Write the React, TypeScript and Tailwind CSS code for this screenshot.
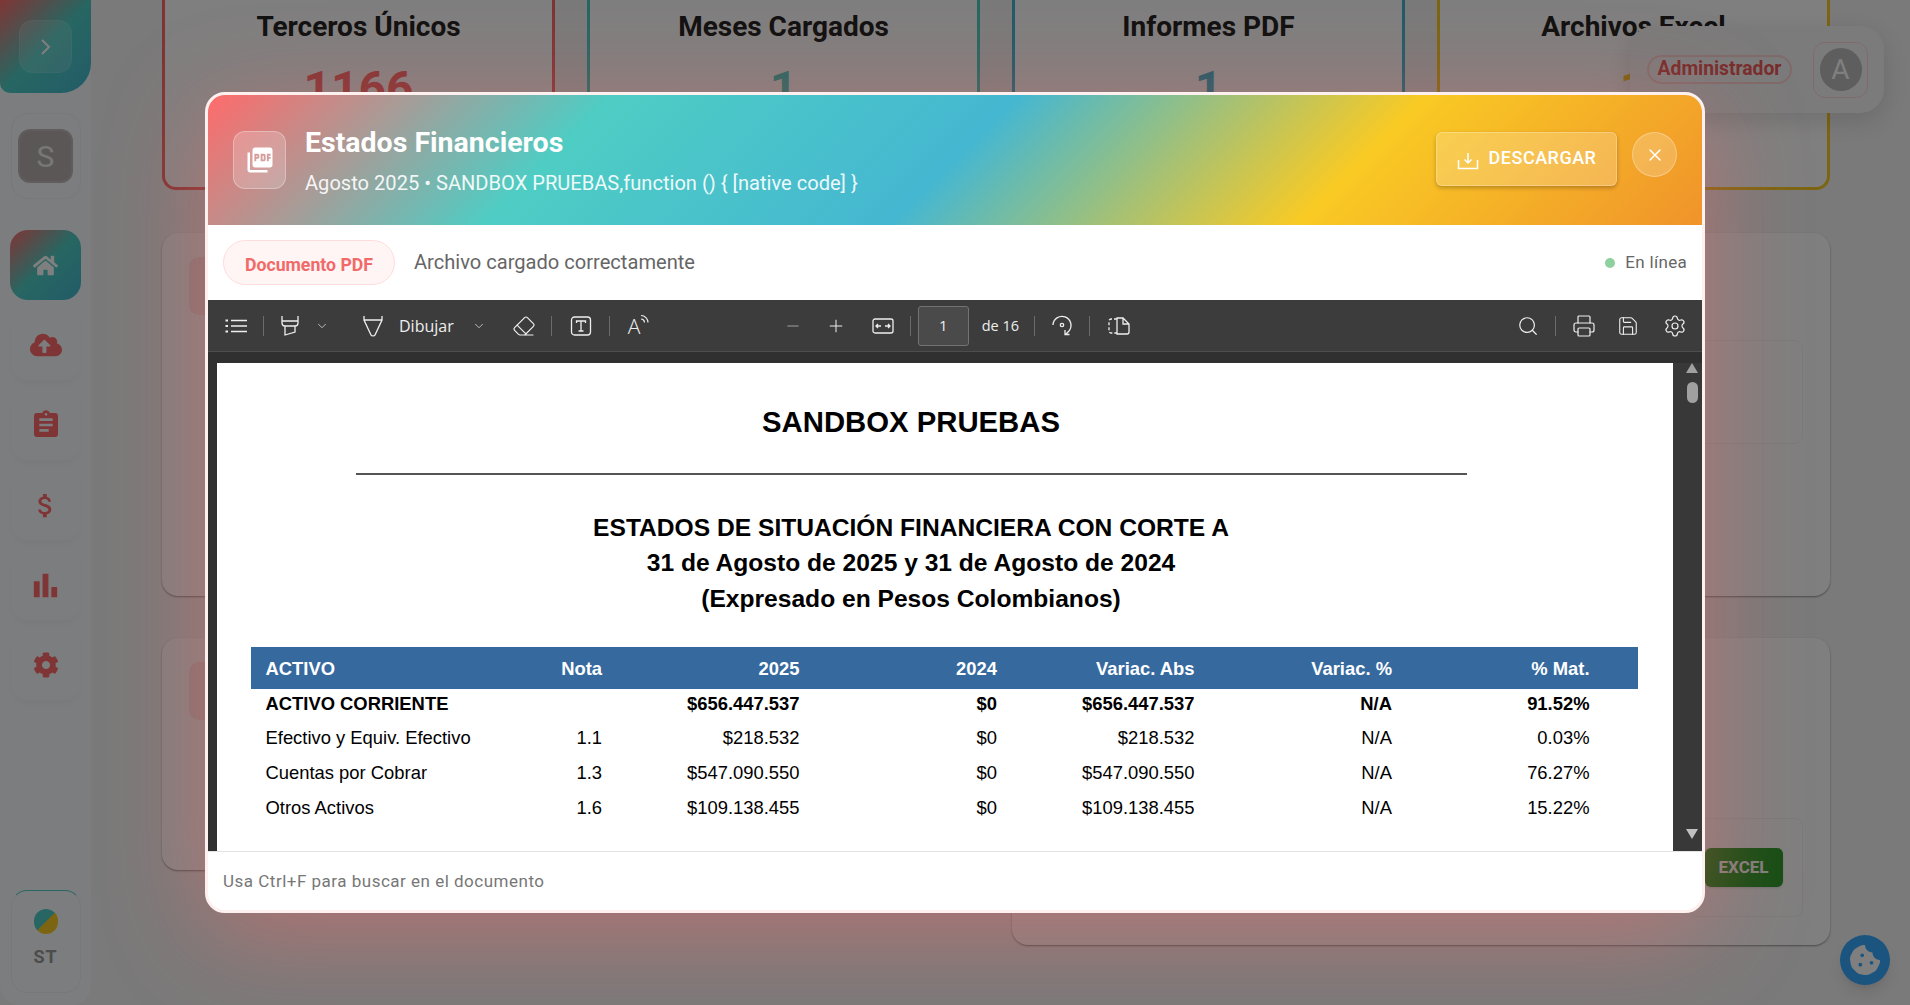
import { ChevronDown, Eraser, Minus, Plus, Printer, Save, Search, Settings, X } from "lucide-react";
import { FaCloudUploadAlt, FaCog, FaCookieBite, FaHome } from "react-icons/fa";
import { MdAssignment, MdAttachMoney, MdBarChart, MdPictureAsPdf } from "react-icons/md";

const stats = [
    { title: "Terceros Únicos", value: "1166", border: "border-[#ff6b6b]", text: "text-[#ff6b6b]" },
    { title: "Meses Cargados", value: "1", border: "border-[#4ecdc4]", text: "text-[#4ecdc4]" },
    { title: "Informes PDF", value: "1", border: "border-[#45b7d1]", text: "text-[#45b7d1]" },
    { title: "Archivos Excel", value: "1", border: "border-[#f9ca24]", text: "text-[#f9ca24]" },
];

const navItems = [
    { Icon: FaCloudUploadAlt, size: 32 },
    { Icon: MdAssignment, size: 32 },
    { Icon: MdAttachMoney, size: 31 },
    { Icon: MdBarChart, size: 35 },
    { Icon: FaCog, size: 26 },
];

const rows = [
    ["ACTIVO CORRIENTE", "", "$656.447.537", "$0", "$656.447.537", "N/A", "91.52%"],
    ["Efectivo y Equiv. Efectivo", "1.1", "$218.532", "$0", "$218.532", "N/A", "0.03%"],
    ["Cuentas por Cobrar", "1.3", "$547.090.550", "$0", "$547.090.550", "N/A", "76.27%"],
    ["Otros Activos", "1.6", "$109.138.455", "$0", "$109.138.455", "N/A", "15.22%"],
];

function Sep({ className }: { className: string }) {
    return <span className={`block h-[20px] w-px bg-[#6b6b6b] shrink-0 ${className}`} />;
}

function Sidebar() {
    return (
        <aside className="w-[91px] h-full shrink-0 bg-[#f8fbff] rounded-b-[20px] flex flex-col items-center">
            <div className="w-full h-[93px] rounded-br-[30px] rounded-bl-[10px] bg-[linear-gradient(135deg,#ff6b6b_0%,#4ecdc4_50%,#45b7d1_100%)] flex items-center justify-center">
                <div className="w-[53px] h-[53px] rounded-[14px] bg-white/15 border border-white/10 flex items-center justify-center text-white">
                    <svg width="14" height="20" viewBox="0 0 14 20" fill="none" stroke="currentColor" strokeWidth="2"><path d="M3 3l7 7-7 7" /></svg>
                </div>
            </div>
            <div className="mt-[20px] w-[70px] h-[86px] rounded-[16px] border border-[#f0f0f0] flex items-center justify-center">
                <div className="w-[55px] h-[54px] rounded-[12px] bg-[#b8aeae] border-2 border-[#c4baba] text-[#eeeeee] text-[30px] flex items-center justify-center">S</div>
            </div>
            <div className="mt-[31px] w-[71px] h-[70px] rounded-[18px] bg-[linear-gradient(135deg,#ff6b6b_0%,#4ecdc4_50%,#45b7d1_100%)] flex items-center justify-center text-white">
                <FaHome size={25} />
            </div>
            <div className="mt-[10px] flex flex-col gap-[10px]">
                {navItems.map(({ Icon, size }, i) => (
                    <div key={i} className="w-[68px] h-[70px] rounded-[16px] shadow-[0_4px_8px_rgba(0,0,0,0.03)] flex items-center justify-center text-[#ff6b6b]">
                        <Icon size={size} />
                    </div>
                ))}
            </div>
            <div className="mt-auto mb-[12px] w-[70px] h-[103px] rounded-[16px] border border-[#f0f0f0] border-t-[#4ecdc4] flex flex-col items-center pt-[18px]">
                <span className="w-[24px] h-[25px] rounded-full bg-[linear-gradient(135deg,#4ecdc4_50%,#f9ca24_50%)]" />
                <span className="mt-[9px] text-[18px] font-bold tracking-[1px] text-[#999]">ST</span>
            </div>
        </aside>
    );
}

function Dashboard() {
    return (
        <div className="flex-1 pl-[71px] pr-[80px]">
            <div className="grid grid-cols-4 gap-[32px]">
                {stats.map((s) => (
                    <div key={s.title} className={`h-[190px] bg-white border-x-[3px] border-b-[3px] rounded-b-[14px] flex flex-col items-center ${s.border}`}>
                        <h3 className="mt-[9px] text-[28px] leading-[36px] font-bold text-[#222]">{s.title}</h3>
                        <p className={`mt-[16px] text-[48px] leading-[56px] font-bold ${s.text}`}>{s.value}</p>
                        <p className="mt-[1px] text-[16px] text-[#888]">Archivos cargados</p>
                    </div>
                ))}
            </div>
            <div className="mt-[43px] h-[363px] bg-white rounded-[16px] shadow-[0_1px_2px_rgba(0,0,0,0.4)] pl-[27px] pr-[27px] pt-[24px] flex justify-between">
                <div className="w-[50px] h-[58px] rounded-[10px] bg-[#ffe6e6]" />
                <div className="mt-[83px] w-[250px] h-[104px] border border-[#f3f3f3] rounded-[8px]" />
            </div>
            <div className="mt-[42px] grid grid-cols-2 gap-[32px] items-start">
                <div className="h-[232px] bg-white rounded-[16px] shadow-[0_1px_2px_rgba(0,0,0,0.4)] pl-[27px] pt-[24px]">
                    <div className="w-[50px] h-[58px] rounded-[10px] bg-[#ffe6e6]" />
                </div>
                <div className="h-[307px] bg-white rounded-[16px] shadow-[0_1px_2px_rgba(0,0,0,0.4)] pr-[27px] pt-[180px] flex justify-end">
                    <div className="w-[113px] h-[99px] border border-[#f3f3f3] rounded-[8px] flex items-center justify-center pr-[6px]">
                        <span className="w-[78px] h-[39px] rounded-[6px] bg-[#2a9d2a] text-white font-bold text-[17px] flex items-center justify-center shadow-sm">EXCEL</span>
                    </div>
                </div>
            </div>
        </div>
    );
}

function Toolbar() {
    const icon = "text-[#eeeeee] shrink-0";
    return (
        <div className="h-[52px] shrink-0 bg-[#3c3c3c] border-b border-[#4d4d4d] flex items-center text-[#eeeeee] font-['Open_Sans',sans-serif]">
            <svg width="22" height="16" viewBox="0 0 22 16" fill="none" stroke="currentColor" strokeWidth="1.300" className={`${icon} ml-[17px]`}>
                <path d="M6 2.500h16M6 8h16M6 13.500h16" />
                <path d="M0.500 2.500h2.500M0.500 8h2.500M0.500 13.500h2.500" strokeWidth="2.200" />
            </svg>
            <Sep className="ml-[16px]" />
            <svg width="20" height="24" viewBox="0 0 20 24" fill="none" stroke="currentColor" strokeWidth="1.300" className={`${icon} ml-[16px]`}>
                <path d="M2 2v7a3 3 0 0 0 3 3h10a3 3 0 0 0 3-3V2M2 7h16M5 12v9l10-3v-6" />
            </svg>
            <ChevronDown size={14} strokeWidth={1.2} className={`${icon} ml-[15px]`} />
            <svg width="22" height="24" viewBox="0 0 22 24" fill="none" stroke="currentColor" strokeWidth="1.300" className={`${icon} ml-[33px]`}>
                <path d="M2 2v4l7 15c.5 1.200 3.500 1.200 4 0l7-15V2M2 6h18" />
            </svg>
            <span className="ml-[15px] text-[16px]">Dibujar</span>
            <ChevronDown size={14} strokeWidth={1.2} className={`${icon} ml-[18px]`} />
            <Eraser size={24} strokeWidth={1.2} className={`${icon} ml-[26px]`} />
            <Sep className="ml-[15px]" />
            <svg width="22" height="22" viewBox="0 0 22 22" fill="none" stroke="currentColor" strokeWidth="1.300" className={`${icon} ml-[18px]`}>
                <rect x="1.500" y="2" width="19" height="18" rx="3" />
                <path d="M6.500 8V6h9v2M11 6v10M8.500 16h5" />
            </svg>
            <Sep className="ml-[17px]" />
            <span className="ml-[18px] relative w-[21px] h-[24px] text-[21px] leading-[24px] font-light">
                A
                <svg width="10" height="11" viewBox="0 0 10 11" fill="none" stroke="currentColor" strokeWidth="1.200" className="absolute right-[-1px] top-[0px]">
                    <path d="M1 5a3.500 3.500 0 0 1 3.500 3.500M1 1.500a7 7 0 0 1 7 7" />
                </svg>
            </span>
            <Minus size={18} strokeWidth={1.2} className="text-[#aaaaaa] shrink-0 ml-[135px]" />
            <Plus size={20} strokeWidth={1.2} className={`${icon} ml-[24px]`} />
            <svg width="22" height="16" viewBox="0 0 22 16" fill="none" stroke="currentColor" strokeWidth="1.300" className={`${icon} ml-[26px]`}>
                <rect x="1" y="1" width="20" height="14" rx="2" />
                <path d="M4 8h5M6 6L4 8l2 2M18 8h-5M16 6l2 2-2 2" />
            </svg>
            <Sep className="ml-[16px]" />
            <span className="ml-[7px] w-[51px] h-[40px] rounded-[3px] bg-[#4a4a4a] border border-[#737373] text-[15px] flex items-center justify-center">1</span>
            <span className="ml-[13px] text-[14.500px] whitespace-nowrap">de 16</span>
            <Sep className="ml-[15px]" />
            <svg width="22" height="24" viewBox="0 0 22 24" fill="none" stroke="currentColor" strokeWidth="1.300" className={`${icon} ml-[16px]`}>
                <path d="M2 11a9 9 0 1 1 16 6l-3 3M14 16v4.500h4.500" />
                <circle cx="11" cy="11" r="1.700" />
            </svg>
            <Sep className="ml-[16px]" />
            <svg width="22" height="18" viewBox="0 0 22 18" fill="none" stroke="currentColor" strokeWidth="1.300" className={`${icon} ml-[18px]`}>
                <path d="M9 2H3a2 2 0 0 0-2 2v10a2 2 0 0 0 2 2h6" strokeDasharray="3 2" />
                <path d="M9 1v16h10a2 2 0 0 0 2-2V7l-6-6zM15 1v6h6" />
            </svg>
            <Search size={22} strokeWidth={1.3} className={`${icon} ml-auto`} />
            <Sep className="ml-[16px]" />
            <Printer size={24} strokeWidth={1.2} className={`${icon} ml-[16px]`} />
            <Save size={22} strokeWidth={1.2} className={`${icon} ml-[21px]`} />
            <Settings size={24} strokeWidth={1.2} className={`${icon} ml-[24px] mr-[15px]`} />
        </div>
    );
}

function PdfPage() {
    return (
        <div className="w-[1456px] h-full bg-white text-black font-['Liberation_Sans',Arial,sans-serif] overflow-hidden">
            <div className="pr-[68px]">
                <h1 className="pt-[40px] text-center font-bold text-[29.300px] leading-[38px]">SANDBOX PRUEBAS</h1>
                <div className="mx-auto mt-[32px] w-[1111px] h-[2px] bg-[#555]" />
                <div className="mt-[35px] text-center font-bold text-[24.600px] leading-[35.300px]">
                    <p>ESTADOS DE SITUACIÓN FINANCIERA CON CORTE A</p>
                    <p>31 de Agosto de 2025 y 31 de Agosto de 2024</p>
                    <p>(Expresado en Pesos Colombianos)</p>
                </div>
            </div>
            <div className="mt-[31px] ml-[34px] mr-[35px] text-[18.400px]">
                <div className="grid grid-cols-[251px_100px_repeat(5,197.500px)] items-center h-[42px] pt-[1px] bg-[#366a9f] text-white font-bold">
                    {["ACTIVO", "Nota", "2025", "2024", "Variac. Abs", "Variac. %", "% Mat."].map((h, i) => (
                        <span key={h} className={i === 0 ? "pl-[14.500px]" : "text-right"}>{h}</span>
                    ))}
                </div>
                {rows.map((r, ri) => (
                    <div key={r[0]} className={`grid grid-cols-[251px_100px_repeat(5,197.500px)] items-center ${ri === 0 ? "h-[34px] font-bold mt-[-3px] pt-[1px]" : "h-[35px]"}`}>
                        {r.map((c, i) => (
                            <span key={i} className={i === 0 ? "pl-[14.500px] whitespace-nowrap" : "text-right"}>{c}</span>
                        ))}
                    </div>
                ))}
            </div>
        </div>
    );
}

function Modal() {
    return (
        <div className="w-[1500px] h-[821px] rounded-[20px] border-[3px] border-[#fff0f0] bg-white flex flex-col overflow-hidden shadow-[0_20px_100px_rgba(255,107,107,0.45)]">
            <header className="h-[130px] shrink-0 flex items-center pl-[25px] pr-[25px] bg-[linear-gradient(135deg,#ff6b6b_0%,#4ecdc4_25%,#45b7d1_50%,#f9ca24_75%,#f0932b_100%)] text-white">
                <div className="w-[53px] h-[58px] rounded-[12px] bg-white/20 border border-white/30 flex items-center justify-center">
                    <MdPictureAsPdf size={30} />
                </div>
                <div className="ml-[19px]">
                    <h2 className="text-[28.500px] leading-[36px] font-bold">Estados Financieros</h2>
                    <p className="mt-[9px] text-[20.100px] leading-[26px] opacity-90">Agosto 2025 • SANDBOX PRUEBAS,function () {"{"} [native code] {"}"}</p>
                </div>
                <button className="ml-auto mb-[2px] w-[181px] h-[54px] pb-[3px] rounded-[6px] bg-white/20 border border-white/25 shadow-[0_2px_4px_rgba(0,0,0,0.25)] flex items-center justify-center gap-[10px] text-[18px] font-medium tracking-[0.5px]">
                    <svg width="22" height="22" viewBox="0 0 22 22" fill="none" stroke="currentColor" strokeWidth="1.500" className="mt-[5px]">
                        <path d="M1.500 11v8.500h19V11M11 4v10M7.500 10.500L11 14l3.500-3.500" />
                    </svg>
                    DESCARGAR
                </button>
                <button className="ml-[15px] mb-[11px] w-[45px] h-[45px] rounded-full bg-white/20 border border-white/30 flex items-center justify-center">
                    <X size={20} strokeWidth={1.800} />
                </button>
            </header>
            <div className="h-[75px] shrink-0 flex items-center pl-[15px] pr-[15px]">
                <span className="w-[172px] h-[45px] pt-[6px] rounded-full bg-[#fff5f5] border border-[#ffdcdc] text-[#f06a6a] font-bold text-[17.700px] flex items-center justify-center">Documento PDF</span>
                <span className="ml-[19px] text-[20.100px] text-[#666]">Archivo cargado correctamente</span>
                <span className="ml-auto w-[10px] h-[10px] rounded-full bg-[#8fd19e]" />
                <span className="ml-[10px] text-[17px] text-[#666] tracking-[0.3px]">En línea</span>
            </div>
            <Toolbar />
            <div className="flex-1 min-h-0 bg-[#303030] flex pl-[9px] pt-[11px]">
                <PdfPage />
                <div className="flex-1 bg-[#383838] flex flex-col items-center pl-[9px] pb-[12px]">
                    <span className="w-0 h-0 border-x-[6.500px] border-x-transparent border-b-[10px] border-b-[#a0a0a0]" />
                    <span className="mt-[9px] w-[11px] h-[21px] rounded-full bg-[#a0a0a0]" />
                    <span className="mt-auto w-0 h-0 border-x-[6.500px] border-x-transparent border-t-[10px] border-t-[#c0c0c0]" />
                </div>
            </div>
            <footer className="h-[59px] pt-[2px] shrink-0 border-t border-[#e3e3e3] flex items-center pl-[15px] text-[17px] text-[#777] tracking-[0.5px]">
                Usa Ctrl+F para buscar en el documento
            </footer>
        </div>
    );
}

export default function App() {
    return (
        <div className="h-[1005px] overflow-hidden relative bg-[#f4f4f4] flex font-['Roboto',sans-serif]">
            <Sidebar />
            <Dashboard />
            <div className="absolute top-[26px] right-[26px] w-[254px] h-[87px] rounded-[24px] bg-[#f7f7f7] shadow-[0_8px_24px_rgba(0,0,0,0.12)] flex items-center pl-[17px]">
                <span className="w-[145px] h-[29px] rounded-full border-2 border-[#ffd5d5] text-[#ef5b5b] font-bold text-[19.300px] flex items-center justify-center">Administrador</span>
                <span className="ml-[21px] w-[55px] h-[56px] rounded-[12px] border border-[#ffd5d5] flex items-center justify-center">
                    <span className="w-[42px] h-[43px] rounded-full bg-[#bdbdbd] text-white text-[28px] flex items-center justify-center">A</span>
                </span>
            </div>
            <div className="absolute top-[935px] left-[1840px] w-[50px] h-[50px] rounded-full bg-[#34a8ff] text-white flex items-center justify-center shadow-lg">
                <FaCookieBite size={30} />
            </div>
            <div className="absolute inset-0 bg-black/50 flex items-center justify-center">
                <Modal />
            </div>
        </div>
    );
}
